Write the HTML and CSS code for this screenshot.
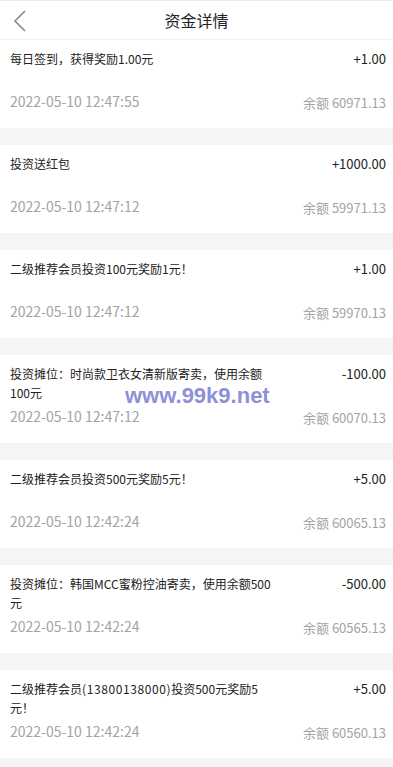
FILE: index.html
```html
<!DOCTYPE html>
<html lang="zh-CN">
<head>
<meta charset="utf-8">
<title>资金详情</title>
<link rel="stylesheet" href="styles.css">
</head>
<body>
<div class="page">
  <header class="header">
    <svg class="back" width="14" height="22" viewBox="0 0 14 22"><path d="M12 1 L2 11 L12 21" fill="none" stroke="#8a8a8a" stroke-width="1.6"/></svg>
    <h1 class="title">资金详情</h1>
  </header>
  <div class="list">
    <div class="card">
      <div class="row"><div class="desc">每日签到，获得奖励1.00元</div><div class="amount">+1.00</div></div>
      <div class="meta"><div class="date">2022-05-10 12:47:55</div><div class="balance">余额 60971.13</div></div>
    </div>
    <div class="card">
      <div class="row"><div class="desc">投资送红包</div><div class="amount">+1000.00</div></div>
      <div class="meta"><div class="date">2022-05-10 12:47:12</div><div class="balance">余额 59971.13</div></div>
    </div>
    <div class="card">
      <div class="row"><div class="desc">二级推荐会员投资100元奖励1元！</div><div class="amount">+1.00</div></div>
      <div class="meta"><div class="date">2022-05-10 12:47:12</div><div class="balance">余额 59970.13</div></div>
    </div>
    <div class="card">
      <div class="row"><div class="desc">投资摊位：时尚款卫衣女清新版寄卖，使用余额100元</div><div class="amount">-100.00</div></div>
      <div class="meta"><div class="date">2022-05-10 12:47:12</div><div class="balance">余额 60070.13</div></div>
      <div class="watermark">www.99k9.net</div>
    </div>
    <div class="card">
      <div class="row"><div class="desc">二级推荐会员投资500元奖励5元！</div><div class="amount">+5.00</div></div>
      <div class="meta"><div class="date">2022-05-10 12:42:24</div><div class="balance">余额 60065.13</div></div>
    </div>
    <div class="card">
      <div class="row"><div class="desc">投资摊位：韩国MCC蜜粉控油寄卖，使用余额500元</div><div class="amount">-500.00</div></div>
      <div class="meta"><div class="date">2022-05-10 12:42:24</div><div class="balance">余额 60565.13</div></div>
    </div>
    <div class="card">
      <div class="row"><div class="desc">二级推荐会员<span class="phone">(13800138000)</span>投资500元奖励5元！</div><div class="amount">+5.00</div></div>
      <div class="meta"><div class="date">2022-05-10 12:42:24</div><div class="balance">余额 60560.13</div></div>
    </div>
  </div>
</div>
</body>
</html>
```
FILE: styles.css
```css
* { box-sizing: border-box; margin: 0; padding: 0; }
html, body { background: #f5f5f5; }
body {
  font-family: "Noto Sans CJK SC", "Noto Sans", sans-serif;
  color: #222;
  height: 767px;
  overflow: hidden;
}
.page { width: 393px; }
.header {
  height: 40px;
  background: #fff;
  border-top: 1px solid #ececec;
  border-bottom: 1px solid #f2f2f2;
  display: flex;
  align-items: center;
  justify-content: center;
  position: relative;
}
.back { position: absolute; left: 13px; top: 9px; }
.title { font-size: 16px; font-weight: 400; color: #222; }
.list { display: flex; flex-direction: column; gap: 17px; }
.card {
  height: 88px;
  background: #fff;
  padding: 9px 7px 0 10px;
  position: relative;
}
.row { display: flex; justify-content: space-between; align-items: flex-start; min-height: 38px; }
.desc {
  width: 264px;
  font-size: 12px;
  line-height: 19px;
  color: #222;
}
.phone { letter-spacing: 0.6px; }
.amount { font-size: 13px; line-height: 19px; color: #222; }
.meta { display: flex; justify-content: space-between; align-items: flex-start; margin-top: 4px; }
.date { font-size: 14px; line-height: 20px; color: #a3a3a3; }
.balance { font-size: 13px; line-height: 20px; color: #a3a3a3; padding-top: 2px; }
.watermark {
  position: absolute;
  left: 125px;
  top: 28px;
  font-family: "Liberation Sans", Arial, sans-serif;
  font-weight: 700;
  font-size: 22px;
  line-height: 26px;
  color: #8e90d8;
  -webkit-text-stroke: 0.6px #ffffff;
  paint-order: stroke fill;
}
```
